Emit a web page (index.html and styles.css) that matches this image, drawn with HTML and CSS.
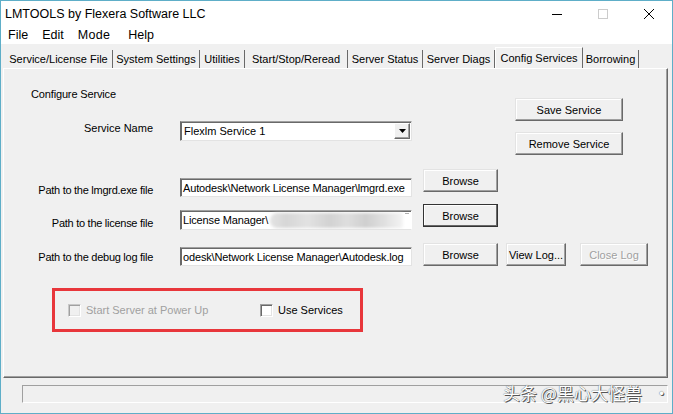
FILE: index.html
```html
<!DOCTYPE html>
<html>
<head>
<meta charset="utf-8">
<title>LMTOOLS</title>
<link rel="stylesheet" href="styles.css">
</head>
<body>
<div class="window">
  <div class="titlebar">
    <span class="title">LMTOOLS by Flexera Software LLC</span>
    <div class="controls">
      <span class="ctl"><svg width="10" height="10" viewBox="0 0 10 10"><line x1="0" y1="5.5" x2="10" y2="5.5" stroke="#000" stroke-width="1"/></svg></span>
      <span class="ctl"><svg width="10" height="10" viewBox="0 0 10 10"><rect x="0.5" y="0.5" width="9" height="9" fill="none" stroke="#cccccc" stroke-width="1"/></svg></span>
      <span class="ctl"><svg width="10" height="10" viewBox="0 0 10 10"><path d="M0 0L10 10M10 0L0 10" stroke="#000" stroke-width="1"/></svg></span>
    </div>
  </div>
  <div class="menubar">
    <span>File</span><span>Edit</span><span class="mode">Mode</span><span>Help</span>
  </div>
  <div class="client">
    <div class="tabs">
      <div class="tab t1">Service/License File</div>
      <div class="tab t2">System Settings</div>
      <div class="tab t3">Utilities</div>
      <div class="tab t4">Start/Stop/Reread</div>
      <div class="tab t5">Server Status</div>
      <div class="tab t6">Server Diags</div>
      <div class="tab t7 sel">Config Services</div>
      <div class="tab t8">Borrowing</div>
    </div>
    <div class="panel">
      <div class="top">
        <div class="top-left">
          <div class="section-title">Configure Service</div>
          <div class="name-row">
            <div class="lbl">Service Name</div>
            <div class="combo">
              <span class="combo-text">Flexlm Service 1</span>
              <span class="drop"><svg width="7" height="4" viewBox="0 0 7 4"><path d="M0 0H7L3.5 4Z" fill="#000"/></svg></span>
            </div>
          </div>
        </div>
        <div class="top-right">
          <div class="btn wide">Save Service</div>
          <div class="btn wide">Remove Service</div>
        </div>
      </div>

      <div class="prow r1">
        <div class="lbl">Path to the lmgrd.exe file</div>
        <div class="field h19"><span class="ftext">Autodesk\Network License Manager\lmgrd.exe</span></div>
        <div class="btn browse">Browse</div>
      </div>

      <div class="prow r2">
        <div class="lbl">Path to the license file</div>
        <div class="field h20 lic"><span class="ftext">License Manager\</span><span class="blur"></span><span class="tick"></span></div>
        <div class="btn browse def">Browse</div>
      </div>

      <div class="prow r3">
        <div class="lbl">Path to the debug log file</div>
        <div class="field h19"><span class="ftext">odesk\Network License Manager\Autodesk.log</span></div>
        <div class="btn browse">Browse</div>
        <div class="btn viewlog">View Log...</div>
        <div class="btn closelog dis">Close Log</div>
      </div>

      <div class="options">
        <div class="chk-item first dis"><span class="chk"></span><span>Start Server at Power Up</span></div>
        <div class="chk-item"><span class="chk on"></span><span>Use Services</span></div>
      </div>
    </div>
    <div class="status"></div>
  </div>
  <div class="watermark">头条 @黑心大怪兽<span class="dot">·</span></div>
</div>
</body>
</html>
```
FILE: styles.css
```css
* { box-sizing: border-box; }
html, body { margin: 0; padding: 0; background: #f0f0f0; }
body {
  font-family: "Liberation Sans", Arial, sans-serif;
  font-size: 11px;
  color: #000;
}
.window {
  position: relative;
  width: 673px;
  height: 414px;
  border: 1px solid #5eaec8;
  background: #f0f0f0;
  display: flex;
  flex-direction: column;
  overflow: hidden;
}
.titlebar {
  height: 25px;
  flex: none;
  background: #fff;
  display: flex;
  align-items: center;
  justify-content: space-between;
}
.title { font-size: 12.5px; padding-left: 4px; }
.controls { display: flex; align-self: stretch; }
.ctl {
  width: 46px;
  display: flex;
  align-items: center;
  justify-content: center;
}
.ctl svg { display: block; }
.menubar {
  height: 18px;
  flex: none;
  background: #fff;
  display: flex;
  align-items: center;
  font-size: 12.5px;
}
.menubar span { padding: 0 7px; }
.menubar .mode { padding-right: 11px; letter-spacing: 0.3px; }
.client {
  flex: 1;
  display: flex;
  flex-direction: column;
  padding: 3px 4px 0 2px;
}
.tabs {
  height: 21px;
  flex: none;
  display: flex;
  align-items: flex-end;
  padding-left: 2px;
}
.tab {
  height: 18px;
  border-right: 1px solid #696969;
  display: flex;
  align-items: center;
  justify-content: center;
  white-space: nowrap;
}
.tab.sel {
  height: 21px;
  border-left: 1px solid #fff;
  border-top: 1px solid #fff;
  padding-bottom: 1px;
}
.t1 { width: 108px; }
.t2 { width: 87px; }
.t3 { width: 45px; }
.t4 { width: 103px; }
.t5 { width: 75px; }
.t6 { width: 72px; }
.t7 { width: 88px; }
.t8 { width: 56px; }
.panel {
  height: 310px;
  flex: none;
  border-top: 1px solid #fff;
  border-left: 1px solid #fff;
  border-right: 1px solid #696969;
  border-bottom: 1px solid #696969;
  box-shadow: inset -1px -1px 0 #a0a0a0;
  display: flex;
  flex-direction: column;
}
.top { display: flex; }
.top-left { width: 408px; }
.section-title { margin: 19px 0 0 27px; line-height: 13px; letter-spacing: -0.15px; }
.name-row { margin-top: 20px; display: flex; }
.lbl {
  width: 149px;
  flex: none;
  text-align: right;
  line-height: 13px;
  white-space: nowrap;
}
.name-row .lbl { margin-top: 1px; }
.prow .lbl { letter-spacing: -0.27px; }
.combo {
  margin-left: 27px;
  width: 232px;
  height: 20px;
  background: #fff;
  border: 1px solid;
  border-color: #a0a0a0 #e3e3e3 #e3e3e3 #696969;
  box-shadow: inset 1px 1px 0 #696969;
  display: flex;
  align-items: center;
  padding: 0 1px 0 3px;
}
.combo-text { flex: 1; white-space: nowrap; }
.drop {
  width: 16px;
  height: 16px;
  background: #f0f0f0;
  border: 1px solid;
  border-color: #fff #696969 #696969 #fff;
  box-shadow: inset -1px -1px 0 #a0a0a0;
  display: flex;
  align-items: center;
  justify-content: center;
}
.drop svg { display: block; }
.top-right {
  margin-left: 103px;
  padding-top: 29px;
  display: flex;
  flex-direction: column;
  gap: 11px;
}
.btn {
  height: 23px;
  background: #f0f0f0;
  border: 1px solid;
  border-color: #e3e3e3 #696969 #696969 #e3e3e3;
  box-shadow: inset -1px -1px 0 #a0a0a0, inset 1px 1px 0 #fff;
  display: flex;
  align-items: center;
  justify-content: center;
  white-space: nowrap;
  flex: none;
}
.btn.def {
  border-color: #333;
  box-shadow: inset -1px -1px 0 #696969, inset 1px 1px 0 #fff;
}
.dis { color: #a0a0a0; }
.btn.dis { text-shadow: 1px 1px 0 #fff; }
.wide { width: 108px; }
.prow { display: flex; align-items: flex-end; }
.prow .btn { align-self: flex-start; }
.r1 { margin-top: 14px; height: 28px; }
.r2 { margin-top: 7px; height: 26px; }
.r3 { margin-top: 13px; height: 23px; }
.r3 .lbl { margin-bottom: 2px; }
.field {
  margin-left: 27px;
  width: 232px;
  background: #fff;
  border: 1px solid;
  border-color: #a0a0a0 #e3e3e3 #e3e3e3 #696969;
  box-shadow: inset 1px 1px 0 #696969;
  display: flex;
  align-items: center;
  padding-left: 2px;
  overflow: hidden;
  flex: none;
}
.h19 { height: 19px; }
.h20 { height: 20px; }
.ftext { white-space: nowrap; letter-spacing: -0.15px; }
.lic { position: relative; border-right-color: #fff; }
.blur {
  flex: 1;
  height: 15px;
  margin: 0 8px 0 2px;
  border-radius: 7px 2px 2px 7px;
  background: linear-gradient(90deg, #e4e4e4 0%, #d6d6d6 12%, #e2e2e2 28%, #d2d2d2 45%, #dedede 58%, #cfcfcf 72%, #e0e0e0 86%, #f4f4f4 100%);
  filter: blur(1.5px);
}
.tick {
  position: absolute;
  right: 2px;
  top: 2px;
  width: 4px;
  height: 1px;
  background: #b0b0b0;
}
.browse { margin-left: 11px; width: 75px; }
.viewlog { margin-left: 8px; width: 60px; }
.closelog { margin-left: 14px; width: 68px; }
.options {
  margin: 22px 0 0 48px;
  width: 311px;
  height: 44px;
  border: 3px solid #e8363b;
  display: flex;
  align-items: center;
  padding-left: 13px;
}
.chk-item { display: flex; align-items: center; gap: 5px; white-space: nowrap; }
.chk-item.first { width: 192px; }
.chk {
  width: 13px;
  height: 13px;
  border: 1px solid;
  border-color: #a0a0a0 #fff #fff #a0a0a0;
  box-shadow: inset 1px 1px 0 #696969, inset -1px -1px 0 #e3e3e3;
  background: #f0f0f0;
}
.dis .chk {
  border-color: #c8c8c8 #fff #fff #c8c8c8;
  box-shadow: inset 1px 1px 0 #a0a0a0, inset -1px -1px 0 #e3e3e3;
}
.chk.on { background: #fff; }
.status {
  margin: 7px 0 0 19px;
  height: 18px;
  flex: none;
  border-top: 1px solid #a0a0a0;
  border-left: 1px solid #a0a0a0;
  border-bottom: 1px solid #fff;
  border-right: 1px solid #fff;
}
.watermark {
  position: absolute;
  left: 502px;
  top: 382px;
  font-family: "Noto Sans CJK SC", sans-serif;
  font-size: 17px;
  line-height: 20px;
  color: #fff;
  white-space: nowrap;
  text-shadow: 1px 1px 0 #555, 0 0 1px #333;
}
.dot { margin-left: 11px; }
```
